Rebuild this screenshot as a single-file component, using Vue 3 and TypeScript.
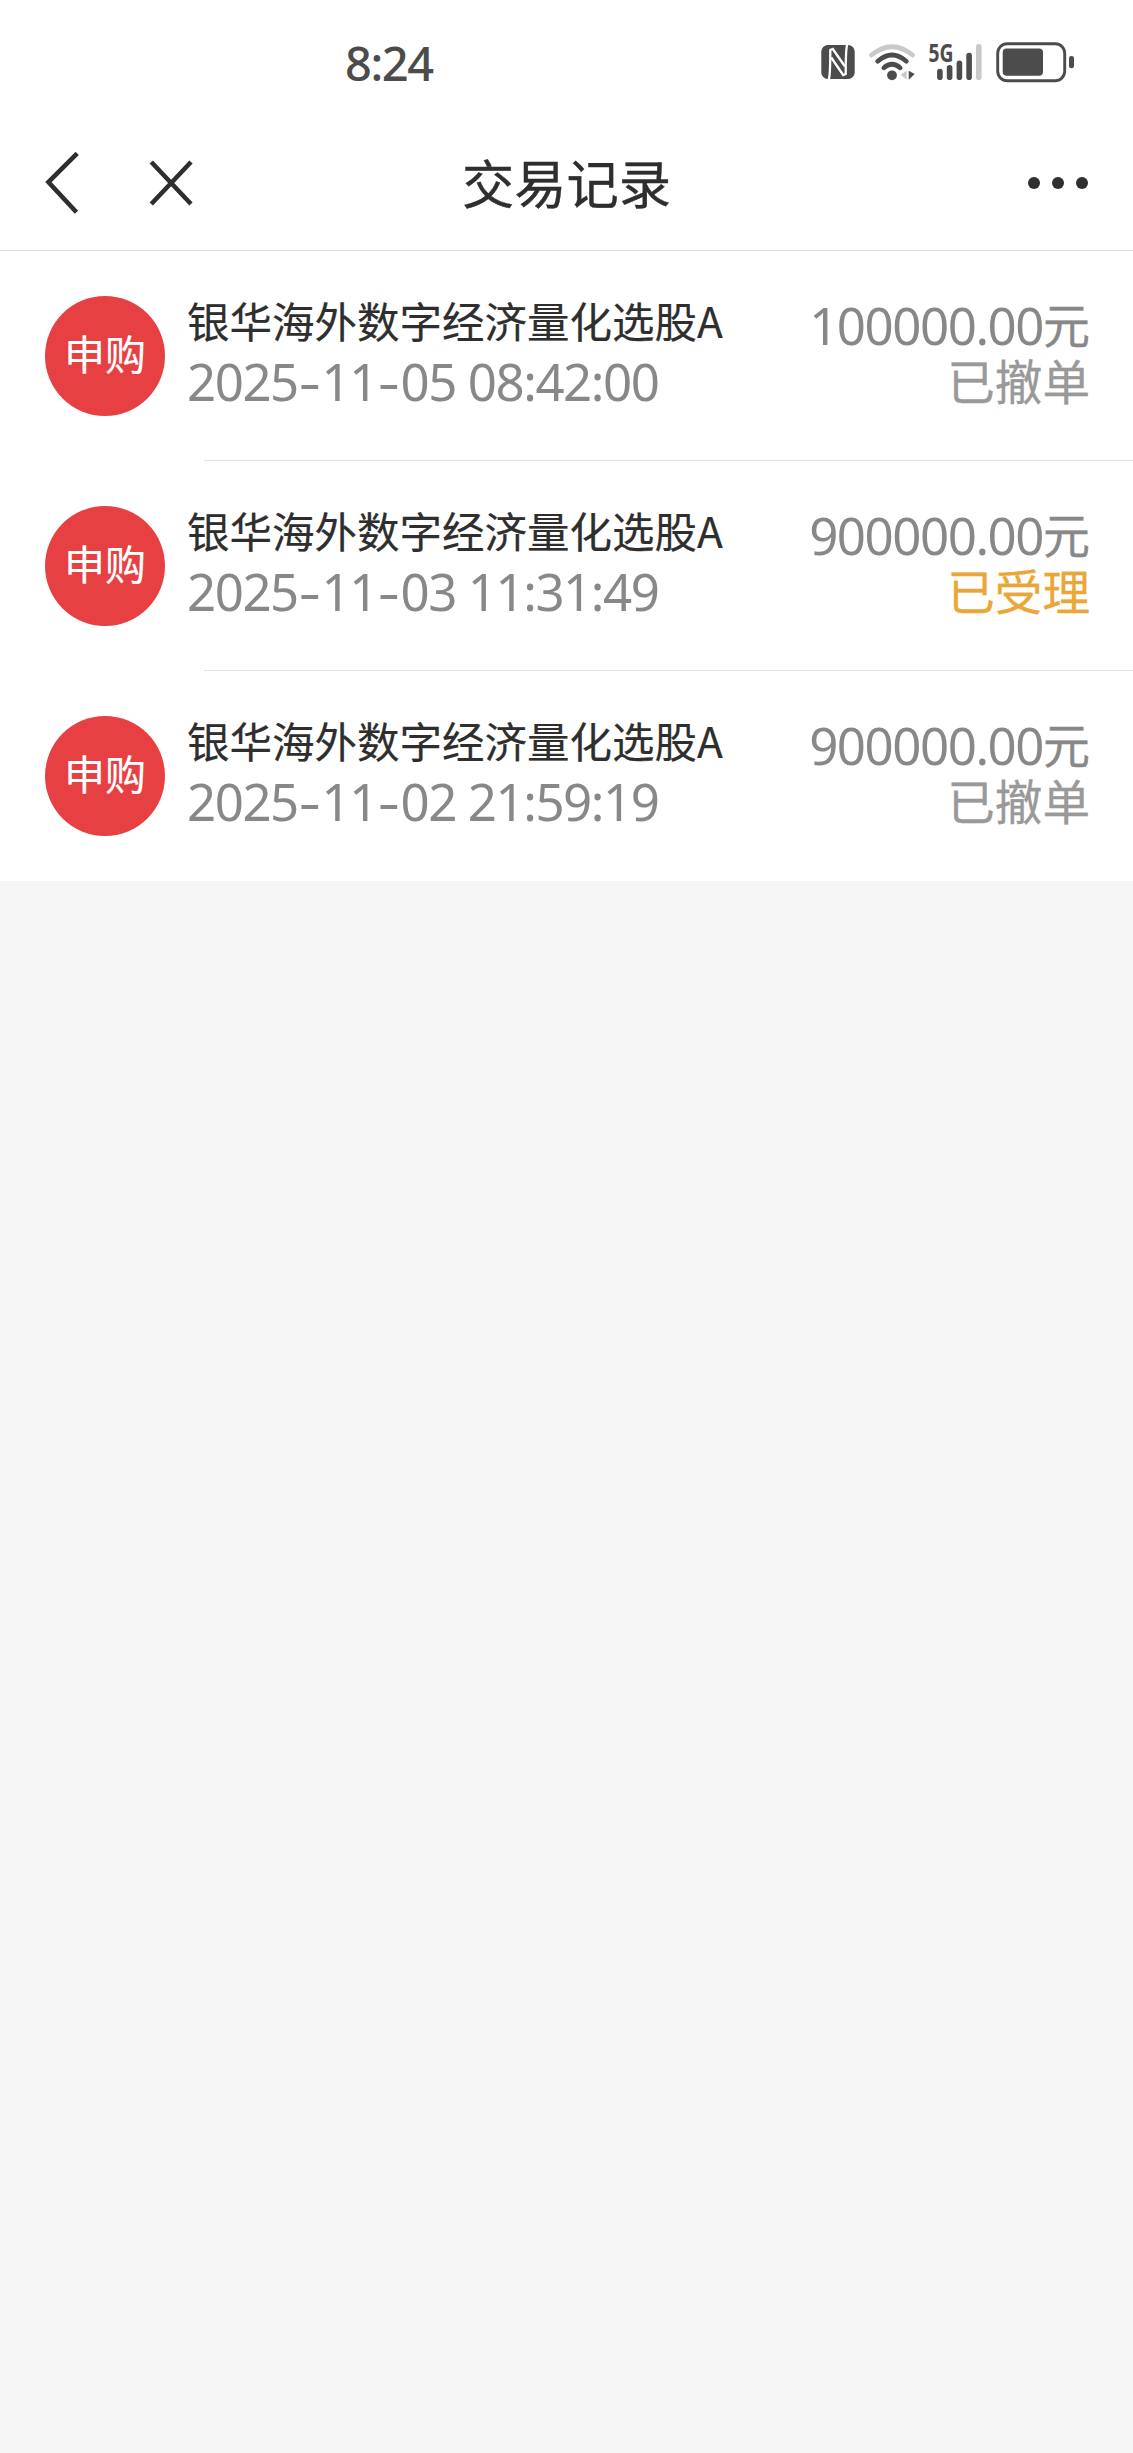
<script setup lang="ts">
interface TradeRecord {
  kind: string
  fund: string
  time: string
  amount: string
  status: string
  accepted: boolean
}

const fund = '银华海外数字经济量化选股A'
const records: TradeRecord[] = [
  { kind: '申购', fund, time: '2025-11-05 08:42:00', amount: '100000.00', status: '已撤单', accepted: false },
  { kind: '申购', fund, time: '2025-11-03 11:31:49', amount: '900000.00', status: '已受理', accepted: true },
  { kind: '申购', fund, time: '2025-11-02 21:59:19', amount: '900000.00', status: '已撤单', accepted: false },
]

// Splits a timestamp into digit runs and the hyphens between them.
const timeParts = (time: string): string[] => time.split(/(-)/)
</script>

<template>
  <div class="screen">
    <div class="status-bar">
      <span class="clock">8:24</span>
      <svg class="indicators" width="260" height="60" viewBox="0 -10 260 60">
        <!-- NFC -->
        <rect x="1.3" y="5" width="33.4" height="34" rx="6.5" fill="#4c4c4c" />
        <g fill="none" stroke="#fff" stroke-width="2.3">
          <path d="M8.8 39.5C10.3 35 10.3 30 10.3 10L12.8 9L25 26.5" />
          <path d="M27.2 4.500C25.700 9 25.700 14 25.700 34L23.200 35L11.200 17.500" />
        </g>
        <!-- Wi-Fi -->
        <g fill="none" stroke-linecap="round" stroke-width="4.8">
          <path d="M51.5 15Q72 -1.5 92.500 15" stroke="#c9c9c9" />
          <path d="M57.700 21.200Q72 8.800 86.300 21.200" stroke="#4c4c4c" />
          <path d="M63.900 27.800Q72 20.800 80.100 27.800" stroke="#4c4c4c" />
        </g>
        <circle cx="72" cy="35.300" r="4.900" fill="#4c4c4c" />
        <path d="M86.700 30.800V39.700L80.700 34.800Z" fill="#c9c9c9" />
        <path d="M88.700 30.800V39.700L94.700 34Z" fill="#4c4c4c" />
        <!-- mobile signal -->
        <text x="108.500" y="22" class="network" textLength="25" lengthAdjust="spacingAndGlyphs">5G</text>
        <g stroke-linecap="round" stroke-width="5.600" stroke="#4c4c4c">
          <path d="M119.900 31.500V37.200" />
          <path d="M129.600 27.700V37.200" />
          <path d="M139.400 23.200V37.200" />
          <path d="M149.100 15.600V37.200" />
          <path d="M158.800 6.800V37.200" stroke="#c9c9c9" />
        </g>
        <!-- battery -->
        <rect x="177.700" y="3.700" width="67" height="37" rx="9.500" fill="none" stroke="#4c4c4c" stroke-width="2.900" />
        <rect x="182.700" y="8.500" width="40.300" height="27.200" rx="4" fill="#4c4c4c" />
        <rect x="249" y="16" width="5" height="12.300" rx="2.300" fill="#4c4c4c" />
      </svg>
    </div>

    <header class="nav">
      <div class="nav-side">
        <svg width="150" height="70" viewBox="0 0 150 70" fill="none" stroke="#2e2e2e" stroke-width="4.600">
          <path d="M32.200 5.300L3.400 34L31.500 64.300" />
          <path d="M106.300 14L146 56M146 14L106.300 56" />
        </svg>
      </div>
      <h1>交易记录</h1>
      <div class="nav-side more"><i></i><i></i><i></i></div>
    </header>

    <ul class="records">
      <li v-for="record in records" :key="record.time" class="record">
        <span class="badge"><span>{{ record.kind }}</span></span>
        <div class="body">
          <div class="info">
            <div class="fund">{{ record.fund }}</div>
            <div class="time num"><span v-for="(part, i) in timeParts(record.time)" :key="i" :class="{ dash: part === '-' }">{{ part }}</span></div>
          </div>
          <div class="result">
            <div class="amount num"><span>{{ record.amount }}</span><span class="unit">元</span></div>
            <div class="status" :class="{ accepted: record.accepted }">{{ record.status }}</div>
          </div>
        </div>
      </li>
    </ul>
  </div>
</template>

<style>
body {
  margin: 0;
  background: #f5f5f5;
}
</style>

<style scoped>
.screen {
  width: 1133px;
  min-height: 2453px;
  background: #f5f5f5;
  font-family: "Noto Sans CJK SC", sans-serif;
  color: #2e2e2e;
}

.status-bar {
  display: flex;
  justify-content: space-between;
  box-sizing: border-box;
  height: 125px;
  padding: 30px 53px 0 345px;
  background: #fff;
}

.clock {
  margin-top: 9px;
  font-family: "Noto Sans", sans-serif;
  font-size: 47px;
  font-weight: 500;
  line-height: 48px;
  letter-spacing: -1.400px;
  color: #4c4c4c;
}

.indicators {
  flex: none;
}

.network {
  font: 700 24.500px "Noto Sans", sans-serif;
  fill: #4c4c4c;
}

.nav {
  display: flex;
  justify-content: space-between;
  align-items: flex-start;
  box-sizing: border-box;
  height: 126px;
  padding: 0 45px;
  border-bottom: 1px solid #dcdcdc;
  background: #fff;
}

.nav-side {
  flex: 1;
  padding-top: 23px;
}

.nav-side svg {
  display: block;
}

.nav h1 {
  margin: 18px 0 0;
  font-size: 52.300px;
  font-weight: 400;
  line-height: 76px;
  -webkit-text-stroke: 0.400px currentColor;
}

.more {
  display: flex;
  justify-content: flex-end;
  gap: 12px;
  padding-top: 52px;
}

.more i {
  width: 12px;
  height: 12px;
  border-radius: 50%;
  background: #2e2e2e;
}

.records {
  margin: 0;
  padding: 0;
  list-style: none;
  background: #fff;
}

.record {
  display: flex;
  height: 210px;
  padding-left: 45px;
}

.badge {
  display: flex;
  flex: none;
  justify-content: center;
  width: 120px;
  height: 120px;
  margin-top: 45px;
  border-radius: 50%;
  background: #e64042;
  color: #fff;
  font-size: 41px;
  line-height: 112px;
  -webkit-text-stroke: 0.200px currentColor;
}

.body {
  display: flex;
  flex: 1;
  justify-content: space-between;
  box-sizing: border-box;
  padding: 38px 43px 0 22px;
  background: linear-gradient(#e2e2e2, #e2e2e2) 39px 100% / 100% 1px no-repeat;
}

.record:last-child .body {
  background: none;
}

.fund {
  font-size: 42.500px;
  line-height: 62px;
  white-space: nowrap;
  -webkit-text-stroke: 0.200px currentColor;
}

.num {
  display: flex;
  font-family: "Noto Sans", "Noto Sans CJK SC", sans-serif;
  font-size: 51px;
  line-height: 58px;
  letter-spacing: -1.470px;
  white-space: pre;
  color: #888;
}

.num .dash {
  width: 23.700px;
  letter-spacing: 0;
  text-align: center;
  transform: scaleX(1.350);
}

.num .unit {
  margin-top: -2px;
  font-family: "Noto Sans CJK SC", sans-serif;
  font-size: 47px;
  letter-spacing: 0;
  -webkit-text-stroke: 0.300px currentColor;
}

.time {
  margin-top: 1px;
}

.result {
  display: flex;
  flex-direction: column;
  align-items: flex-end;
  padding-top: 7px;
}

.amount {
  height: 56px;
}

.status {
  font-size: 47.600px;
  line-height: 56px;
  color: #999;
  -webkit-text-stroke: 0.300px currentColor;
}

.status.accepted {
  color: #eaa737;
}
</style>
